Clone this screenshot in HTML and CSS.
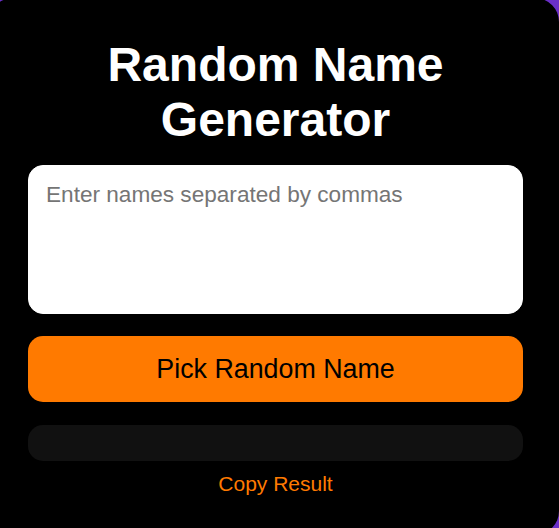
FILE: index.html
```html
<!DOCTYPE html>
<html lang="en">
<head>
<meta charset="utf-8">
<title>Random Name Generator</title>
<link rel="stylesheet" href="styles.css">
</head>
<body>
  <main class="card">
    <h1 class="title">Random Name Generator</h1>
    <textarea class="names" placeholder="Enter names separated by commas"></textarea>
    <button class="pick">Pick Random Name</button>
    <div class="result"></div>
    <button class="copy">Copy Result</button>
  </main>
</body>
</html>
```

FILE: styles.css
```css
html, body {
  margin: 0;
  padding: 0;
}
body {
  background: #6a2fc8;
  overflow: hidden;
  height: 528px;
  padding-top: 1px;
  box-sizing: border-box;
  font-family: "Liberation Sans", Arial, sans-serif;
}
.card {
  box-sizing: border-box;
  width: 570px;
  height: 537px;
  margin: -3px 0 0 -11px;
  padding: 39px 36px 0 39px;
  background: #000;
  border-radius: 24px;
  display: flex;
  flex-direction: column;
}
.title {
  margin: 0;
  color: #fff;
  font-size: 48px;
  font-weight: bold;
  text-align: center;
  line-height: normal;
}
.names {
  box-sizing: border-box;
  margin-top: 18px;
  height: 149px;
  width: 100%;
  padding: 16px 17px;
  border: 1px solid #fff;
  border-radius: 15px;
  background: #fff;
  font-family: "Liberation Sans", Arial, sans-serif;
  font-size: 22.6px;
  color: #000;
  resize: none;
  outline: none;
}
.names::placeholder {
  color: #757575;
}
.pick {
  margin-top: 22px;
  height: 66px;
  width: 100%;
  border: none;
  border-radius: 15px;
  background: #ff7a00;
  color: #000;
  font-family: "Liberation Sans", Arial, sans-serif;
  font-size: 26.8px;
  cursor: pointer;
}
.result {
  margin-top: 23px;
  height: 36px;
  border-radius: 15px;
  background: #111;
}
.copy {
  align-self: center;
  margin-top: 11px;
  padding: 0;
  border: none;
  background: transparent;
  color: #ff7a00;
  font-family: "Liberation Sans", Arial, sans-serif;
  font-size: 21px;
  line-height: normal;
  cursor: pointer;
}
```
